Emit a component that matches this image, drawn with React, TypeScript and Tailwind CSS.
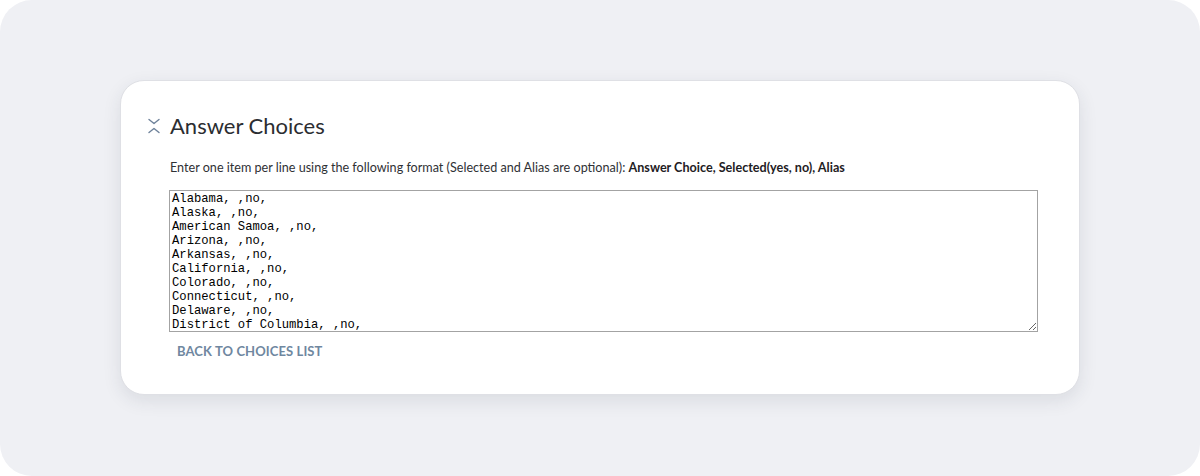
import React from "react";

const states = [
  "Alabama, ,no,",
  "Alaska, ,no,",
  "American Samoa, ,no,",
  "Arizona, ,no,",
  "Arkansas, ,no,",
  "California, ,no,",
  "Colorado, ,no,",
  "Connecticut, ,no,",
  "Delaware, ,no,",
  "District of Columbia, ,no,",
  "Florida, ,no,",
  "Georgia, ,no,",
  "Guam, ,no,",
  "Hawaii, ,no,",
];

export default function App() {
  return (
    <div className="w-[1200px] h-[476px] bg-white">
      <div
        className="w-[1200px] h-[476px] rounded-[32px] bg-[#eff0f4] pt-[80px] px-[120px]"
        style={{ fontFamily: "Lato, 'Open Sans', sans-serif" }}
      >
        <div className="w-[960px] h-[315px] rounded-[24px] bg-white border border-[#dfe0e5] shadow-[0_6px_18px_rgba(40,50,70,0.10)] pt-[30px] pl-[27px] pr-[41px]">
          <div className="flex items-center h-[30px]">
            <svg width="14" height="18" viewBox="0 0 14 18" className="ml-[-1px] mr-[8px]">
              <path d="M2 2.5 L7 6.5 L12 2.5" fill="none" stroke="#6d819a" strokeWidth="1.4" strokeLinecap="round" strokeLinejoin="round" />
              <path d="M2 15.5 L7 11.5 L12 15.5" fill="none" stroke="#6d819a" strokeWidth="1.4" strokeLinecap="round" strokeLinejoin="round" />
            </svg>
            <h2 className="text-[22px] leading-[30px] text-[#2b2d31] font-normal ml-[1px]">Answer Choices</h2>
          </div>
          <div className="pl-[22px]">
            <p className="mt-[19px] text-[12.6px] leading-[16px] text-[#2f3135]">
              Enter one item per line using the following format (Selected and Alias are optional):{" "}
              <span className="font-bold text-[#1e2023]">Answer Choice, Selected(yes, no), Alias</span>
            </p>
            <textarea
              readOnly
              defaultValue={states.join("\n")}
              className="block mt-[14px] ml-[-1px] w-[869px] h-[142px] border border-[#a3a3a3] px-[2px] pt-[1px] text-[12.2px] leading-[14px] text-black overflow-hidden outline-none"
              style={{ fontFamily: "'Liberation Mono', 'Courier New', monospace", resize: "both" }}
            />
            <button className="mt-[11px] ml-[7px] text-[13px] leading-[16px] font-bold tracking-[0.1px] text-[#6f87a0] uppercase">
              Back to choices list
            </button>
          </div>
        </div>
      </div>
    </div>
  );
}
